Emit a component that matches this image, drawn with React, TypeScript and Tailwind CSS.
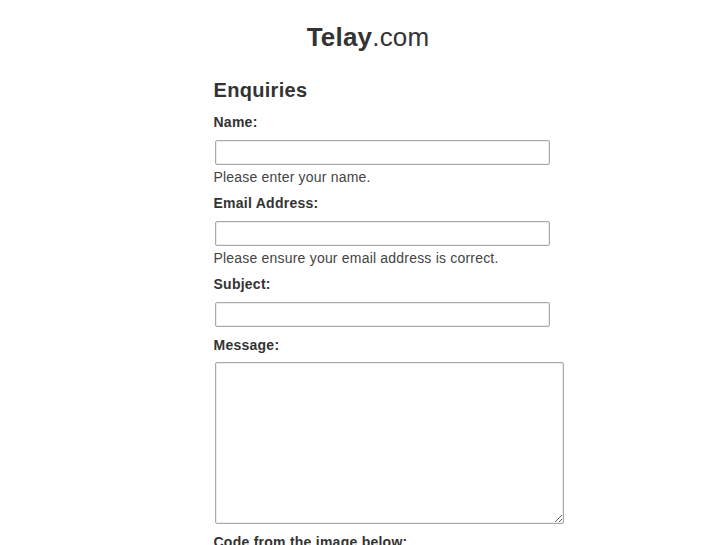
import React from 'react';

const Field = ({ label, help }: { label: string; help?: string }) => (
  <div className="mb-[6px]">
    <label className="block text-[14px] font-bold leading-[20px] tracking-[0.25px] text-[#333]">{label}</label>
    <input
      type="text"
      className="mt-[8px] ml-[1px] block h-[25px] w-[335px] rounded-[2px] border border-[#a9a9a9] bg-white shadow-[inset_0_0_0_1px_#ececec]"
    />
    {help && (
      <p className="mt-[2px] text-[14px] leading-[20px] tracking-[0.2px] text-[#444]">{help}</p>
    )}
    {!help && <div className="h-[2px]" />}
  </div>
);

export default function App() {
  return (
    <div className="min-h-[545px] bg-white font-['Liberation_Sans',Arial,sans-serif] text-[#333]">
      {/* Site title */}
      <h1 className="pt-[22px] pl-[9px] text-center text-[26px] leading-[30px] tracking-[0.2px]">
        <span className="font-bold">Telay</span>.com
      </h1>

      <div className="mx-auto mt-[26px] w-[300px]">
        <h2 className="text-[20px] font-bold leading-[24px] tracking-[0.3px]">Enquiries</h2>

        <form className="mt-[10px]">
          <Field label="Name:" help="Please enter your name." />
          <Field label="Email Address:" help="Please ensure your email address is correct." />
          <Field label="Subject:" />

          <div className="mb-[8px]">
            <label className="block text-[14px] font-bold leading-[20px] tracking-[0.25px]">Message:</label>
            <textarea className="mt-[7px] ml-[1px] block h-[162px] w-[349px] resize rounded-[2px] border border-[#a9a9a9] bg-white shadow-[inset_0_0_0_1px_#ececec]" />
          </div>

          <label className="block text-[14px] font-bold leading-[20px] tracking-[0.25px]">Code from the image below:</label>
        </form>
      </div>
    </div>
  );
}
